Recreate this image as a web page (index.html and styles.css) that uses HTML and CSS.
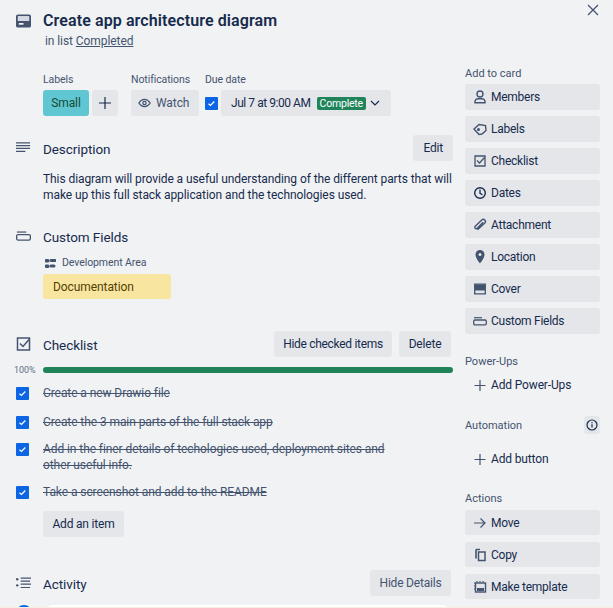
FILE: index.html
```html
<!DOCTYPE html>
<html lang="en">
<head>
<meta charset="utf-8">
<title>Create app architecture diagram</title>
<link rel="stylesheet" href="styles.css">
</head>
<body>
<div class="card">
  <main class="main">
    <header class="head title-head">
      <svg class="ico" viewBox="0 0 16 14"><path fill-rule="evenodd" d="M2 0h12a2 2 0 0 1 2 2v10a2 2 0 0 1-2 2H2a2 2 0 0 1-2-2V2a2 2 0 0 1 2-2zm0 2v5h12V2zm1 7v2h5V9z" fill="#44546f"/><path d="M2 2h12v5H2z" fill="#d5d9e2"/></svg>
      <h1 class="title">Create app architecture diagram</h1>
    </header>
    <p class="inlist">in list <a class="link">Completed</a></p>

    <div class="meta">
      <div class="meta-group labels-group">
        <div class="meta-label">Labels</div>
        <div class="meta-row">
          <span class="chip-label">Small</span>
          <span class="btn square"><svg width="14" height="14" viewBox="0 0 14 14"><path d="M7 1v12M1 7h12" stroke="#172b4d" stroke-width="1.2"/></svg></span>
        </div>
      </div>
      <div class="meta-group notif-group">
        <div class="meta-label">Notifications</div>
        <div class="meta-row">
          <span class="btn watch"><svg width="13" height="10" viewBox="0 0 16 12"><path d="M1 6c2-3 4.500-4.500 7-4.500S13 3 15 6c-2 3-4.500 4.500-7 4.500S3 9 1 6z" fill="none" stroke="#44546f" stroke-width="1.500"/><circle cx="8" cy="6" r="2" fill="none" stroke="#44546f" stroke-width="1.500"/></svg>Watch</span>
        </div>
      </div>
      <div class="meta-group">
        <div class="meta-label">Due date</div>
        <div class="meta-row due-row">
          <span class="check"><svg viewBox="0 0 13 13"><path d="M3.500 6.700l2 1.800 3.800-4" fill="none" stroke="#fff" stroke-width="1.200"/></svg></span>
          <span class="btn due">Jul 7 at 9:00 AM<span class="complete">Complete</span><svg width="10" height="6" viewBox="0 0 10 6"><path d="M1 1l4 4 4-4" fill="none" stroke="#172b4d" stroke-width="1.200"/></svg></span>
        </div>
      </div>
    </div>

    <section class="section desc-section">
      <div class="head">
        <svg class="ico" viewBox="0 0 16 14"><path d="M0 1.500h15M0 4.500h15M0 7.500h15M0 10.500h10" stroke="#44546f" stroke-width="1.300" fill="none"/></svg>
        <h2 class="h2">Description</h2>
        <span class="btn head-btn">Edit</span>
      </div>
      <p class="desc">This diagram will provide a useful understanding of the different parts that will make up this full stack application and the technologies used.</p>
    </section>

    <section class="section fields-section">
      <div class="head">
        <svg class="ico" viewBox="0 0 16 10"><path d="M1 .8h10" stroke="#44546f" stroke-width="1.300"/><rect x=".7" y="3.500" width="14.600" height="5.800" rx="1.500" fill="none" stroke="#44546f" stroke-width="1.400"/></svg>
        <h2 class="h2">Custom Fields</h2>
      </div>
      <div class="field-name"><svg width="11" height="9" viewBox="0 0 11 9"><path d="M0 1a1 1 0 0 1 1-1h2a1 1 0 0 1 0 3.500H1a1 1 0 0 1-1-1zM5 1a1 1 0 0 1 1-1h4a1 1 0 0 1 0 3H6a1 1 0 0 1-1-1zM0 6.500a1 1 0 0 1 1-1h2a1 1 0 0 1 0 3.500H1a1 1 0 0 1-1-1zM5 6.500a1 1 0 0 1 1-1h3a1 1 0 0 1 0 3H6a1 1 0 0 1-1-1z" fill="#44546f"/></svg>Development Area</div>
      <div class="field-value">Documentation</div>
    </section>

    <section class="section check-section">
      <div class="head">
        <svg class="ico" viewBox="0 0 14 14"><path d="M1 1h12v12H1z" fill="none" stroke="#44546f" stroke-width="1.500"/><path d="M3.500 6.500l3 3 6-7" fill="none" stroke="#44546f" stroke-width="1.500"/></svg>
        <h2 class="h2">Checklist</h2>
        <span class="btn head-btn hide-checked">Hide checked items</span>
        <span class="btn head-btn delete">Delete</span>
      </div>
      <div class="progress"><span class="pct">100%</span><span class="bar"></span></div>
      <ul class="items">
        <li class="item"><span class="check"><svg viewBox="0 0 13 13"><path d="M3.500 6.700l2 1.800 3.800-4" fill="none" stroke="#fff" stroke-width="1.200"/></svg></span><span class="item-text">Create a new Drawio file</span></li>
        <li class="item"><span class="check"><svg viewBox="0 0 13 13"><path d="M3.500 6.700l2 1.800 3.800-4" fill="none" stroke="#fff" stroke-width="1.200"/></svg></span><span class="item-text">Create the 3 main parts of the full stack app</span></li>
        <li class="item"><span class="check"><svg viewBox="0 0 13 13"><path d="M3.500 6.700l2 1.800 3.800-4" fill="none" stroke="#fff" stroke-width="1.200"/></svg></span><span class="item-text">Add in the finer details of techologies used, deployment sites and<br>other useful info.</span></li>
        <li class="item"><span class="check"><svg viewBox="0 0 13 13"><path d="M3.500 6.700l2 1.800 3.800-4" fill="none" stroke="#fff" stroke-width="1.200"/></svg></span><span class="item-text">Take a screenshot and add to the README</span></li>
      </ul>
      <span class="btn add-item">Add an item</span>
    </section>

    <section class="section activity-section">
      <div class="head">
        <svg class="ico" viewBox="0 0 16 12"><circle cx="1.300" cy="2" r="1.300" fill="#44546f"/><circle cx="1.300" cy="8.500" r="1.300" fill="#44546f"/><path d="M5 .8h11M5 4h10M5 7.300h11M5 10.800h10" stroke="#44546f" stroke-width="1.300"/></svg>
        <h2 class="h2">Activity</h2>
        <span class="btn head-btn hide-details">Hide Details</span>
      </div>
      <div class="comment"><span class="avatar"></span><span class="comment-box"></span></div>
    </section>
  </main>

  <aside class="side">
    <a class="close"><svg width="12" height="12" viewBox="0 0 12 12"><path d="M1 1l10 10M11 1L1 11" stroke="#44546f" stroke-width="1.300"/></svg></a>
    <h3 class="side-label first">Add to card</h3>
    <div class="side-list">
      <span class="btn side-btn"><svg class="sico" viewBox="0 0 14 14"><circle cx="7" cy="4" r="3" fill="none" stroke="#44546f" stroke-width="1.400"/><path d="M2 12.700v-1.200c0-1.500 1.500-2.800 3-2.800h4c1.500 0 3 1.300 3 2.800v1.200z" fill="none" stroke="#44546f" stroke-width="1.400"/></svg>Members</span>
      <span class="btn side-btn"><svg class="sico" viewBox="0 0 14 14"><path d="M1 7l5-4.500 6.500 1 .5 5-4 3.500-3 .5z" fill="none" stroke="#44546f" stroke-width="1.400"/><circle cx="5.500" cy="7.500" r="1.500" fill="#44546f"/></svg>Labels</span>
      <span class="btn side-btn"><svg class="sico" viewBox="0 0 14 14"><path d="M2 2h10v10H2z" fill="none" stroke="#44546f" stroke-width="1.300"/><path d="M4 6.500l2.500 2.500 5-5.500" fill="none" stroke="#44546f" stroke-width="1.300"/></svg>Checklist</span>
      <span class="btn side-btn"><svg class="sico" viewBox="0 0 14 14"><circle cx="7" cy="7" r="5.300" fill="none" stroke="#172b4d" stroke-width="1.400"/><path d="M7 3.500V7.300l2.500 1.500" fill="none" stroke="#172b4d" stroke-width="1.300"/></svg>Dates</span>
      <span class="btn side-btn"><svg class="sico" viewBox="0 0 14 14"><path d="M4.500 11.800L11.800 5a2 2 0 0 0-3-3L2.200 8.300a1.300 1.300 0 0 0 2 2l6-6" fill="none" stroke="#44546f" stroke-width="1.400"/></svg>Attachment</span>
      <span class="btn side-btn"><svg class="sico" viewBox="0 0 14 14"><path fill-rule="evenodd" d="M7 0a4.500 4.500 0 0 1 4.500 4.500C11.500 8 8 12 7 13.500 6 12 2.500 8 2.500 4.500A4.500 4.500 0 0 1 7 0zm0 3a1.500 1.500 0 1 0 0 3 1.500 1.500 0 0 0 0-3z" fill="#44546f"/></svg>Location</span>
      <span class="btn side-btn"><svg class="sico" viewBox="0 0 14 14"><path d="M1.700 2.200h10.600v9.600H1.700z" fill="none" stroke="#44546f" stroke-width="1.300"/><path d="M2 2.500h10v6H2z" fill="#44546f"/></svg>Cover</span>
      <span class="btn side-btn"><svg class="sico" viewBox="0 0 14 14"><path d="M1 3.700h8" stroke="#44546f" stroke-width="1.200"/><rect x=".7" y="6" width="12.600" height="4.800" rx="1.300" fill="none" stroke="#44546f" stroke-width="1.300"/></svg>Custom Fields</span>
    </div>

    <h3 class="side-label powerups">Power-Ups</h3>
    <span class="side-add"><svg class="sico" viewBox="0 0 14 14"><path d="M7 2v11M1.500 7.500h11" stroke="#44546f" stroke-width="1.200"/></svg>Add Power-Ups</span>

    <div class="auto-row">
      <h3 class="side-label">Automation</h3>
      <span class="info"><svg width="12" height="12" viewBox="0 0 12 12"><circle cx="6" cy="6" r="5" fill="none" stroke="#172b4d" stroke-width="1.200"/><path d="M6 5.300v3.200M6 3v1.200" stroke="#172b4d" stroke-width="1.200"/></svg></span>
    </div>
    <span class="side-add add-button"><svg class="sico" viewBox="0 0 14 14"><path d="M7 2v11M1.500 7.500h11" stroke="#44546f" stroke-width="1.200"/></svg>Add button</span>

    <h3 class="side-label actions">Actions</h3>
    <div class="side-list action-list">
      <span class="btn side-btn"><svg class="sico" viewBox="0 0 14 14"><path d="M1 7h11M7.500 2.500L12 7l-4.500 4.500" fill="none" stroke="#44546f" stroke-width="1.200"/></svg>Move</span>
      <span class="btn side-btn"><svg class="sico" viewBox="0 0 14 14"><path d="M3 1.500v9" stroke="#44546f" stroke-width="1.600"/><path d="M3 1.500h4" stroke="#44546f" stroke-width="1.400"/><rect x="5.500" y="4" width="6.500" height="8.500" fill="none" stroke="#44546f" stroke-width="1.500"/></svg>Copy</span>
      <span class="btn side-btn"><svg class="sico" viewBox="0 0 14 14"><path d="M1 3h1.500M1 6h1.500M1 9h1.500M4 1v1.500M7 1v1.500M10 1v1.500" stroke="#44546f" stroke-width="1.200"/><rect x="2.500" y="3" width="10" height="9" fill="none" stroke="#44546f" stroke-width="1.400"/><path d="M4 8h7v3H4z" fill="#44546f"/></svg>Make template</span>
    </div>
  </aside>
  <div class="edge"></div>
</div>
</body>
</html>
```

FILE: styles.css
```css
* { box-sizing: border-box; }
html, body { margin: 0; padding: 0; height: 100%; overflow: hidden; }
body {
  background: #f1f2f4;
  color: #172b4d;
  font-family: Roboto, "Noto Sans", sans-serif;
  font-size: 12px;
  line-height: 16px;
  letter-spacing: -0.08px;
}
.card { position: relative; display: flex; width: 613px; height: 608px; padding-left: 16px; overflow: hidden; }
.main { width: 437px; flex: none; padding-top: 10px; }
.side { width: 135px; margin-left: 12px; flex: none; padding-top: 65px; }
.edge { position: absolute; left: 0; right: 0; bottom: 0; height: 1px; background: #f5efe0; }

.btn {
  display: inline-flex;
  align-items: center;
  height: 26px;
  background: #e4e6ea;
  border-radius: 3px;
  color: #172b4d;
  white-space: nowrap;
}

.head { display: flex; align-items: center; height: 26px; position: relative; }
.ico { width: 15px; height: 14px; flex: none; margin-right: 12px; }
.title-head { height: 22px; }
.title { margin: 0; font-size: 16px; line-height: 22px; font-weight: 600; letter-spacing: 0.1px; }
.inlist { margin: 1px 0 0 29px; height: 16px; color: #44546f; }
.link { color: #44546f; text-decoration: underline; }

.meta { display: flex; margin: 24px 0 0 27px; }
.meta-label { font-size: 10.5px; line-height: 14px; color: #44546f; margin-bottom: 3px; }
.meta-row { display: flex; align-items: center; gap: 3px; }
.labels-group { width: 88px; }
.notif-group { width: 74px; }
.chip-label { display: flex; align-items: center; justify-content: center; width: 46px; height: 26px; background: #60c6d2; border-radius: 3px; color: #164b35; }
.square { width: 26px; justify-content: center; }
.watch { width: 68px; padding-left: 7px; gap: 5px; color: #44546f; }
.due-row { gap: 3px; }
.check { display: block; width: 13px; height: 13px; background: #0c66e4; border-radius: 1px; flex: none; }
.check svg { display: block; width: 13px; height: 13px; }
.due { width: 170px; padding-left: 10px; letter-spacing: -0.45px; }
.complete { display: inline-block; margin: 0 4px 0 6px; padding: 0 3px; height: 13px; line-height: 13px; font-size: 10.5px; letter-spacing: -0.2px; background: #1f845a; color: #fff; border-radius: 2px; }

.section { margin: 0; }
.h2 { margin: 0; padding-top: 2px; font-size: 13.5px; line-height: 20px; font-weight: 400; flex: 1; }
.head-btn { padding: 0 10px; flex: none; justify-content: center; letter-spacing: -0.2px; }
.desc-section { margin-top: 19px; }
.desc { margin: 10px 0 0 27px; color: #172b4d; }
.fields-section { margin-top: 20px; }
.field-name { display: flex; align-items: center; gap: 6px; margin: 7px 0 0 29px; font-size: 10.500px; line-height: 14px; color: #44546f; }
.field-value { display: flex; align-items: center; width: 128px; height: 25px; margin: 4px 0 0 27px; padding-left: 10px; background: #f8e6a0; border-radius: 3px; color: #533f04; }

.check-section { margin-top: 32px; }
.hide-checked { margin-right: 7px; width: 118px; letter-spacing: -0.3px; padding: 0; }
.delete { width: 52px; padding: 0; }
.check-section .head { padding-right: 2px; }
.progress { display: flex; align-items: center; height: 6px; margin-top: 10px; position: relative; }
.pct { width: 27px; margin-left: -2px; font-size: 9px; color: #626f86; flex: none; }
.bar { display: block; width: 410px; height: 6px; background: #1f845a; border-radius: 3px; margin-left: 2px; }
.items { list-style: none; margin: 0; padding: 0; margin-top: 12px; }
.item { display: flex; align-items: flex-start; gap: 14px; margin-bottom: 13px; color: #44546f; }
.item .check { margin-top: 2px; }
.item-text { text-decoration: line-through; }
.item:nth-child(2) { margin-bottom: 11px; }
.item:nth-child(3) { margin-bottom: 11px; }
.item:nth-child(4) { margin-bottom: 11px; }
.add-item { margin-left: 27px; padding: 0; width: 81px; justify-content: center; letter-spacing: -0.2px; }

.activity-section { margin-top: 33px; }
.activity-section .head { padding-right: 2px; }
.hide-details { color: #44546f; width: 81px; padding: 0; }
.comment { display: flex; gap: 13px; margin-top: 9px; }
.avatar { width: 16px; height: 16px; border-radius: 50%; background: #0c66e4; flex: none; }
.comment-box { width: 405px; height: 40px; background: #fff; border-radius: 8px; }

.close { position: absolute; top: 4px; right: 14px; display: block; }
.close svg { display: block; }
.side-label { margin: 0; font-size: 11px; line-height: 18px; font-weight: 400; color: #44546f; letter-spacing: 0; }
.first { margin-bottom: 1px; }
.side-list { display: flex; flex-direction: column; gap: 6px; }
.side-btn { width: 135px; height: 26px; padding-left: 8px; letter-spacing: -0.25px; }
.side-add { letter-spacing: -0.15px; }
.sico { width: 14px; height: 14px; flex: none; margin-right: 4px; }
.powerups { margin-top: 19px; }
.side-add { display: flex; align-items: center; height: 26px; padding-left: 8px; margin-top: 1px; }
.auto-row { display: flex; align-items: center; justify-content: space-between; height: 18px; margin-top: 18px; }
.auto-row .side-label { line-height: 16px; padding-top: 2px; }
.info { display: flex; align-items: center; justify-content: center; width: 16px; height: 18px; background: #e4e6ea; border-radius: 3px; }
.add-button { margin-top: 12px; }
.actions { margin-top: 18px; }
.action-list { margin-top: 2px; gap: 7px; }
.action-list .side-btn { height: 25px; }
```
